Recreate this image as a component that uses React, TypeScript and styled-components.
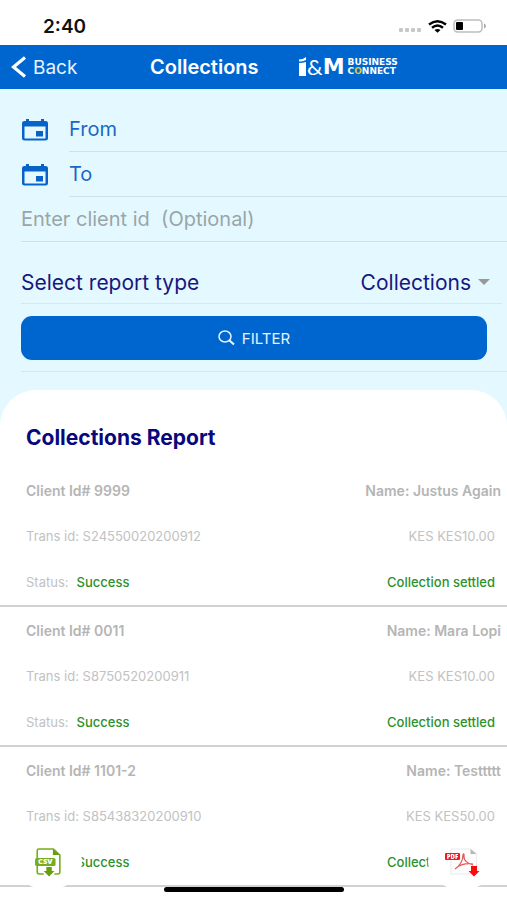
import React from "react";
import styled, { createGlobalStyle } from "styled-components";

const GlobalStyle = createGlobalStyle`
  * { box-sizing: border-box; }
  body { margin: 0; background: #fff; font-family: Inter, "Liberation Sans", sans-serif; }
  button, input, select { font: inherit; color: inherit; margin: 0; padding: 0; border: 0; background: none; }
  button { cursor: pointer; }
  svg { display: block; flex: none; }
`;

const Screen = styled.div`
  min-height: 100vh;
  background: #e4f9ff;
  display: flex;
  flex-direction: column;
`;

const StatusBar = styled.div`
  height: 45px;
  padding: 7px 21px 0 43px;
  display: flex;
  align-items: center;
  justify-content: space-between;
  background: #fff;
`;

const Clock = styled.span`
  font-size: 19px;
  font-weight: 600;
  color: #111;
`;

const Indicators = styled.div`
  display: flex;
  align-items: center;
  gap: 6px;
`;

const NavBar = styled.header`
  height: 44px;
  padding-left: 11px;
  display: flex;
  align-items: center;
  background: #0066cf;
  color: #fff;
`;

const BackButton = styled.button`
  display: flex;
  align-items: center;
  gap: 7px;
  width: 139px;
  font-size: 19px;
  color: #e6f3ff;
`;

const Title = styled.h1`
  margin: 0;
  width: 149px;
  font-size: 20px;
  font-weight: 600;
`;

const Brand = styled.div`
  display: flex;
  align-items: center;
  gap: 3px;
`;

const BrandMark = styled.div`
  display: flex;
  align-items: flex-end;
  font-family: "DejaVu Sans", sans-serif;
  font-size: 22px;
  font-weight: 700;
  line-height: 20px;
`;

const Ampersand = styled.span`
  font-family: Lato, sans-serif;
  font-weight: 400;
  font-size: 22px;
`;

const BrandName = styled.div`
  display: flex;
  flex-direction: column;
  font-family: "DejaVu Sans", sans-serif;
  font-size: 9px;
  font-weight: 700;
  line-height: 9px;
`;

const Gold = styled.span`
  color: #d8c93a;
`;

const Form = styled.form`
  padding: 18px 0 18px 21px;
  display: flex;
  flex-direction: column;
`;

const DateRow = styled.label`
  display: flex;
  align-items: center;
  gap: 20px;
  height: 45px;
`;

const Field = styled.input<{ $tone: string }>`
  flex: 1;
  min-width: 0;
  width: 100%;
  min-height: 45px;
  font-size: 20px;
  border-bottom: 1px solid #cce2e8;
  border-radius: 0;
  outline: none;
  color: ${(p) => p.$tone};
  &::placeholder { color: ${(p) => p.$tone}; opacity: 1; }
`;

const ReportType = styled.div`
  display: flex;
  align-items: center;
  justify-content: space-between;
  height: 42px;
  margin: 20px 5px 12px 0;
  padding-right: 12px;
  border-bottom: 1px solid #d3e9ee;
  font-size: 21px;
  color: #17177f;
`;

const SelectWrap = styled.div`
  display: flex;
  align-items: center;
  gap: 7px;
`;

const Select = styled.select`
  appearance: none;
  text-align-last: right;
  outline: none;
`;

const FilterButton = styled.button`
  display: flex;
  align-items: center;
  justify-content: center;
  gap: 7px;
  height: 44px;
  margin-right: 20px;
  border-radius: 11px;
  background: #0066cf;
  color: #e6f3ff;
  font-size: 15px;
`;

const Divider = styled.hr`
  width: 100%;
  margin: 11px 0 0;
  border: 0;
  border-top: 1px solid #d3e9ee;
`;

const Report = styled.main`
  flex: 1;
  background: #fff;
  border-radius: 36px 36px 0 0;
`;

const ReportTitle = styled.h2`
  margin: 0;
  padding: 36px 26px 17px;
  font-size: 21px;
  line-height: 24px;
  font-weight: 700;
  color: #08087c;
`;

const List = styled.ul`
  list-style: none;
  margin: 0;
  padding: 0;
`;

const Entry = styled.li`
  border-bottom: 2px solid #d2d2d2;
`;

const Line = styled.div<{ $strong?: boolean }>`
  display: flex;
  align-items: center;
  justify-content: space-between;
  height: 46px;
  padding: 0 ${(p) => (p.$strong ? 6 : 12)}px 0 26px;
  font-size: ${(p) => (p.$strong ? 14 : 13)}px;
  font-weight: ${(p) => (p.$strong ? 600 : 400)};
  color: ${(p) => (p.$strong ? "#b5b5b5" : "#c2c2c2")};
`;

const Good = styled.span`
  font-weight: 500;
  color: #2c912c;
`;

const Status = styled.span`
  display: flex;
  gap: 8px;
`;

const Downloads = styled.div`
  position: fixed;
  left: 14px;
  right: 11px;
  bottom: 10px;
  display: flex;
  justify-content: space-between;
  pointer-events: none;
`;

const RoundButton = styled.button`
  width: 68px;
  height: 56px;
  display: flex;
  align-items: center;
  justify-content: center;
  border-radius: 50%;
  background: #fff;
  pointer-events: auto;
`;

const HomeIndicator = styled.div`
  position: fixed;
  bottom: 8px;
  left: 50%;
  width: 180px;
  height: 5px;
  margin-left: -90px;
  border-radius: 3px;
  background: #000;
`;

const CalendarIcon = () => (
  <svg width="28" height="24" viewBox="0 0 28 24" aria-hidden="true">
    <path
      fill="#0863c8"
      fillRule="evenodd"
      d="M5 1h3v2h12V1h3v2h1.500a2.500 2 0 0 1 2.500 2v15.500a2.500 2 0 0 1-2.500 2h-21a2.500 2 0 0 1-2.500-2V5a2.500 2 0 0 1 2.500-2H5zM3.500 8.500v12h21v-12zM15 13h7v5.500h-7z"
    />
  </svg>
);

const CsvIcon = () => (
  <svg width="28" height="30" viewBox="0 0 26 30" preserveAspectRatio="none" aria-hidden="true">
    <path d="M3 11V3.500Q3 2 4.500 2H18l6 6v17q0 2-2 2h-3M3 18v7q0 2 2 2h4" fill="none" stroke="#76ad1c" strokeWidth="1.500" />
    <path d="M17.500 2v6H24z" fill="#64a00c" />
    <rect x="1" y="11" width="19" height="8" rx="1.500" fill="#76ad1c" />
    <text x="10.500" y="17.500" textAnchor="middle" fontFamily="Open Sans, sans-serif" fontSize="7" fontWeight="800" fill="#fff">CSV</text>
    <path d="M11.500 20h5v4H19l-5 5.500L9 24h2.500z" fill="#64a00c" />
  </svg>
);

const PdfIcon = () => (
  <svg width="36" height="30" viewBox="0 0 36 30" aria-hidden="true">
    <path d="M7 2h20l5.500 5v20H7z" fill="#fdfdfd" stroke="#e9e9e9" />
    <path d="M26.500 2v5h6z" fill="#b8b8b8" />
    <path d="M11 22c5-3 8-9 8-14 0-2 1.500-1 1 1-.7 4 4 8 9 9M12 21c4-3 10-5 17-4" fill="none" stroke="#e85656" strokeWidth="1.200" />
    <rect x="1" y="6" width="15" height="7" rx="1" fill="#ed1c24" />
    <text x="8.500" y="12" textAnchor="middle" fontFamily="Open Sans, sans-serif" fontSize="6" fontWeight="800" fill="#fff">PDF</text>
    <path d="M27 19h6v5h2.500L30 29.500 24.500 24H27z" fill="#fa0c0c" />
  </svg>
);

const entries = [
  { client: "9999", name: "Justus Again", trans: "S24550020200912", amount: "KES10.00" },
  { client: "0011", name: "Mara Lopi", trans: "S8750520200911", amount: "KES10.00" },
  { client: "1101-2", name: "Testtttt", trans: "S85438320200910", amount: "KES50.00" },
];

export default function App() {
  return (
    <Screen>
      <GlobalStyle />
      <StatusBar>
        <Clock>2:40</Clock>
        <Indicators>
          <svg width="23" height="14" viewBox="0 0 23 14" aria-hidden="true">
            <g fill="#c8c8c8">
              <rect x="0" y="9" width="4" height="4" rx="1" />
              <rect x="6" y="9" width="4" height="4" rx="1" />
              <rect x="12" y="9" width="4" height="4" rx="1" />
              <rect x="18" y="9" width="4" height="4" rx="1" />
            </g>
          </svg>
          <svg width="19" height="13" viewBox="0 0 19 13" aria-hidden="true">
            <path d="M1 4.500Q9.500-2 18 4.500M4 7.700Q9.500 3.200 15 7.700" fill="none" stroke="#000" strokeWidth="2.400" />
            <path d="M6.500 10Q9.500 7.800 12.500 10L9.500 12.700z" />
          </svg>
          <svg width="33" height="14" viewBox="0 0 33 14" aria-hidden="true">
            <rect x="1" y="1" width="28" height="12" rx="3.500" fill="#fff" stroke="#bdbdbd" strokeWidth="1.500" />
            <rect x="3" y="3" width="7" height="8" rx="1" />
            <path d="M31 4.500q2 .8 2 2.500t-2 2.500z" fill="#aaa" />
          </svg>
        </Indicators>
      </StatusBar>
      <NavBar>
        <BackButton type="button">
          <svg width="15" height="22" viewBox="0 0 15 22" aria-hidden="true">
            <path d="M14 1.500 2.500 11 14 20.500" fill="none" stroke="#fff" strokeWidth="3.200" />
          </svg>
          Back
        </BackButton>
        <Title>Collections</Title>
        <Brand>
          <BrandMark>
            <svg width="8" height="20" viewBox="0 0 8 20" aria-hidden="true">
              <path d="M0 2.500Q4 2.500 7 0v3Q4 4.500 0 4.500zM0 6q4 0 7-1v14H0z" fill="#fff" />
            </svg>
            <Ampersand>&amp;</Ampersand>M
          </BrandMark>
          <BrandName>
            <span>BUSINESS</span>
            <span>
              C<Gold>O</Gold>NNECT
            </span>
          </BrandName>
        </Brand>
      </NavBar>
      <Form onSubmit={(e) => e.preventDefault()}>
        <DateRow>
          <CalendarIcon />
          <Field $tone="#1b68c4" placeholder="From" aria-label="From" />
        </DateRow>
        <DateRow>
          <CalendarIcon />
          <Field $tone="#1b68c4" placeholder="To" aria-label="To" />
        </DateRow>
        <Field $tone="#9aa5a8" placeholder={"Enter client id \u00a0(Optional)"} aria-label="Client id" />
        <ReportType>
          <label htmlFor="report-type">Select report type</label>
          <SelectWrap>
            <Select id="report-type" defaultValue="Collections">
              <option>Collections</option>
            </Select>
            <svg width="12" height="10" viewBox="0 0 12 10" aria-hidden="true">
              <path d="M0 1h12L6 7z" fill="#999" />
            </svg>
          </SelectWrap>
        </ReportType>
        <FilterButton type="submit">
          <svg width="17" height="16" viewBox="0 0 17 16" aria-hidden="true">
            <ellipse cx="7" cy="6.500" rx="6" ry="5.500" fill="none" stroke="#e6f3ff" strokeWidth="1.500" />
            <path d="m11.500 10.500 4.500 4" stroke="#e6f3ff" strokeWidth="2.200" />
          </svg>
          FILTER
        </FilterButton>
        <Divider />
      </Form>
      <Report>
        <ReportTitle>Collections Report</ReportTitle>
        <List>
          {entries.map((e) => (
            <Entry key={e.client}>
              <Line $strong>
                <span>Client Id# {e.client}</span>
                <span>Name: {e.name}</span>
              </Line>
              <Line>
                <span>Trans id: {e.trans}</span>
                <span>KES {e.amount}</span>
              </Line>
              <Line>
                <Status>
                  Status: <Good>Success</Good>
                </Status>
                <Good>Collection settled</Good>
              </Line>
            </Entry>
          ))}
        </List>
      </Report>
      <Downloads>
        <RoundButton type="button" aria-label="Download CSV">
          <CsvIcon />
        </RoundButton>
        <RoundButton type="button" aria-label="Download PDF">
          <PdfIcon />
        </RoundButton>
      </Downloads>
      <HomeIndicator />
    </Screen>
  );
}
